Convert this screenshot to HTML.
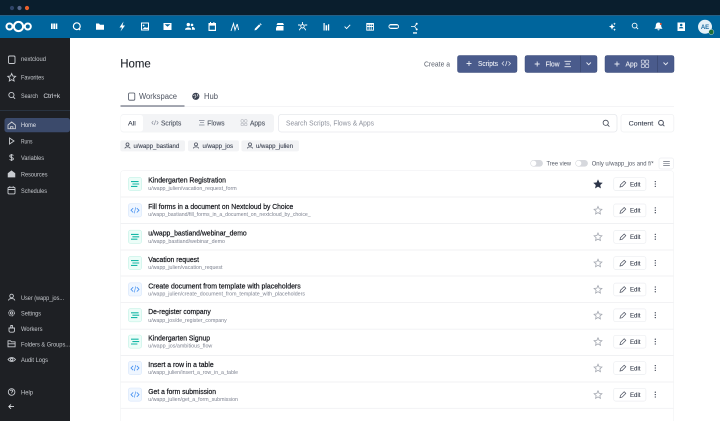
<!DOCTYPE html>
<html><head><meta charset="utf-8"><style>
html,body{margin:0;padding:0;background:#fff;width:720px;height:421px;overflow:hidden}
svg{display:block;filter:blur(.25px)}
text{font-family:"Liberation Sans",sans-serif}
.t{font-size:7.6px;font-weight:normal;fill:#14161c;stroke:#14161c;stroke-width:.22}
.s{font-size:5.6px;fill:#7d8290}
.n{font-size:6.4px;fill:#c5c8cd}
.l{font-size:7px;fill:#3b414e}
.e{font-size:6.6px;fill:#3a4150;stroke:#3a4150;stroke-width:.12}
.b{font-size:7px;fill:#eef0f6;stroke:#eef0f6;stroke-width:.1}
.ic{fill:none;stroke:#c9ccd1;stroke-width:.9}
.hw{fill:#fff}
.hs{fill:none;stroke:#fff;stroke-width:1.2}
</style></head><body>
<svg width="720" height="421" viewBox="0 0 720 421" xmlns="http://www.w3.org/2000/svg">
<defs>
<g id="flow"><rect x="-6.6" y="-6.6" width="13.2" height="13.2" rx="2.2" fill="#ecfdf8" stroke="#c4f2e6" stroke-width=".6"/><path d="M-4 -2.4H3.6M-2.6 0H4.2M-4 2.4H2.4" stroke="#14b8a6" stroke-width="1.1" fill="none"/></g>
<g id="code"><rect x="-6.6" y="-6.6" width="13.2" height="13.2" rx="2.2" fill="#eff6ff" stroke="#d8e6fb" stroke-width=".6"/><path d="M-1.8 -2.2L-4 0L-1.8 2.2M1.8 -2.2L4 0L1.8 2.2" stroke="#3b8bf0" stroke-width=".8" fill="none"/><path d="M.7 -3L-.7 3" stroke="#3b8bf0" stroke-width=".6"/></g>
<path id="star" d="M0 -3.8L1.15 -1.25L3.9 -.95L1.85 .95L2.4 3.7L0 2.3L-2.4 3.7L-1.85 .95L-3.9 -.95L-1.15 -1.25Z"/>
<g id="act">
<use href="#star" x="598" fill="none" stroke="#a3a7b0" stroke-width=".8"/>
<rect x="613.7" y="-6.3" width="32.2" height="12.8" rx="2" fill="#fff" stroke="#eceef1" stroke-width=".7"/>
<path d="M620 3L620.5 .8L624.2 -2.8L625.8 -1.2L622.2 2.5Z" fill="none" stroke="#4b5160" stroke-width=".7"/>
<text x="630" y="2.3" class="e" textLength="10.5" lengthAdjust="spacingAndGlyphs">Edit</text>
<circle cx="655.3" cy="-2.4" r=".65" fill="#3a4150"/><circle cx="655.3" cy="0" r=".65" fill="#3a4150"/><circle cx="655.3" cy="2.4" r=".65" fill="#3a4150"/>
</g>
<g id="usr"><circle cx="0" cy="-1.4" r="1.5" fill="none" stroke="#4b5160" stroke-width=".8"/><path d="M-2.6 2.6C-2.3 .6 2.3 .6 2.6 2.6" fill="none" stroke="#4b5160" stroke-width=".8"/></g>
<g id="mini"><rect x="-3" y="-3" width="2.5" height="2.5" rx=".5"/><rect x=".5" y="-3" width="2.5" height="2.5" rx=".5"/><rect x="-3" y=".5" width="2.5" height="2.5" rx=".5"/><rect x=".5" y=".5" width="2.5" height="2.5" rx=".5"/></g>
</defs>

<rect width="720" height="421" fill="#fff"/>
<rect width="720" height="15" fill="#0a1e2d"/>
<circle cx="12" cy="8" r="2.1" fill="#2f4468"/><circle cx="19.5" cy="8" r="2.1" fill="#56678a"/><circle cx="27" cy="8" r="2.1" fill="#e8602c"/>
<rect y="15" width="720" height="23" fill="#00659c"/>
<rect y="15" width="720" height=".8" fill="#2f5f80"/>
<g fill="none" stroke="#fff" stroke-width="2"><circle cx="9.5" cy="26.5" r="3"/><circle cx="18.5" cy="26.5" r="4.6"/><circle cx="27.8" cy="26.5" r="3"/></g>

<g class="hw">
<rect x="51" y="23.5" width="1.7" height="5.5"/><rect x="53.3" y="23.5" width="1.7" height="5.5"/><rect x="55.6" y="23.5" width="1.7" height="5.5"/>
<path d="M96 23.5h3l1 1.2h4v5h-8z"/>
<path d="M123.5 21.5L119.5 27.5H122L120.5 31.5L125 25.5H122.5Z"/>
<path fill-rule="evenodd" d="M141 22.5h8v8h-8zM142 23.5v6h6v-6z"/><circle cx="143.6" cy="25.5" r=".9"/><path d="M142.5 29l2.5-2 1.2 1 1-.8.8.8v1z"/>
<path fill-rule="evenodd" d="M163.5 23h8v7h-8zM164.6 24.2l2.9 2.6 2.9-2.6z"/>
<circle cx="188.3" cy="24.6" r="1.7"/><circle cx="192" cy="24.9" r="1.3"/><path d="M185 29.7c0-3 6.4-3 6.4 0zM192 27c2 0 3 1 3 2.7h-3z"/>
<path fill-rule="evenodd" d="M208.5 23h7.5v8h-7.5zM209.6 25.6v4.2h5.3v-4.2z"/><rect x="210" y="22" width="1" height="1.6"/><rect x="213.4" y="22" width="1" height="1.6"/>
<path d="M254.5 30.4l.4-1.8 4.2-4.2 1.4 1.4-4.2 4.2zM259.6 23.9l.7-.7 1.4 1.4-.7.7z"/>
<path d="M277 26h6.5v4.5H276v-2.5l1-2zM277.5 23h5.5l1 2h-7.5z"/>
<path d="M323.5 23h1.2v7.5h-1.2zM325.6 25.2h1.6v5.3h-1.6zM328 24.2h1.2v6.3H328z" />
<path fill-rule="evenodd" d="M366.3 23h7.6v7.6h-7.6zM367.3 24.6v1.4h1.4v-1.4zM369.6 24.6v1.4h1.2v-1.4zM371.6 24.6v1.4h1.4v-1.4zM367.3 27v2.7h1.4V27zM369.6 27v2.7h1.2V27zM371.6 27v2.7h1.4V27z"/>
<path fill-rule="evenodd" d="M391 24h5.5a2.5 2.5 0 0 1 0 5H391a2.5 2.5 0 0 1 0-5zM390.5 25.4a1.2 1.2 0 0 0 0 2.4h6.5a1.2 1.2 0 0 0 0-2.4z"/>
<rect x="413" y="32.3" width="4" height="1.3"/><circle cx="416.7" cy="23.8" r="1"/><circle cx="416.7" cy="29.4" r="1"/>
</g>
<g class="hs">
<circle cx="76.8" cy="26.2" r="3.4"/><path d="M78.6 28.6l1.6 1.4"/>
<path d="M231 31L233.5 23.5L235 30L237.2 24M237.2 24L238.6 30" stroke-width=".9"/>
<circle cx="302.5" cy="26.3" r="1.7" stroke-width=".9"/><path d="M298 25h2.6M304.6 25h2.6M302.5 22v2.4M300.7 28l-1.5 2.3M304.3 28l1.5 2.3" stroke-width=".9"/>
<path d="M344.6 26.6l2 2 3.6-3.8" stroke-width=".9"/>
<path d="M411 26.5h3.6l2-2.6M414.6 26.5l2 2.6" stroke-width=".8"/>
</g>
<g class="hw">
<path d="M612 23.5l.9 2.2 2.2.9-2.2.9-.9 2.2-.9-2.2-2.2-.9 2.2-.9zM614.5 22.5l.4 1 1 .4-1 .4-.4 1-.4-1-1-.4 1-.4zM614.5 28.3l.4 1 1 .4-1 .4-.4 1-.4-1-1-.4 1-.4z"/>
<path d="M658.5 22.5c2 0 2.7 1.5 2.7 3.2 0 1.7 1 2.4 1.3 3H654.5c.3-.6 1.3-1.3 1.3-3 0-1.7.7-3.2 2.7-3.2zM657.4 29.3h2.2a1.1 1.1 0 0 1-2.2 0z"/>
<path fill-rule="evenodd" d="M677.5 22.5h7.5v8.5h-7.5zM681.2 23.7a1.3 1.3 0 1 0 .01 0zM679 28.4c0-2 4.4-2 4.4 0z"/>
</g>
<circle cx="660.8" cy="24" r="1" fill="#e8502c"/>
<circle cx="634.6" cy="25.6" r="2.4" fill="none" stroke="#fff" stroke-width=".9"/><path d="M636.3 27.3l1.8 1.8" stroke="#fff" stroke-width=".9"/>
<circle cx="705" cy="26.8" r="7" fill="#e6f1f7"/>
<text x="705" y="29" text-anchor="middle" font-size="6" fill="#1f6ea3" font-weight="bold">AE</text>
<circle cx="711.3" cy="32" r="2.6" fill="#1b6e37" stroke="#cfe1ea" stroke-width=".5"/>

<rect y="38" width="70" height="383" fill="#1e2024"/>
<path d="M0 110.5H70" stroke="#2e3a4a" stroke-width=".7"/>
<rect x="4.5" y="118" width="65.5" height="14.2" rx="2.5" fill="#3b4a6b"/>
<rect x="8.5" y="56" width="6.5" height="7.5" rx="1.2" class="ic"/>
<use href="#star" x="11.7" y="77.3" class="ic"/>
<circle cx="11.4" cy="95" r="2.6" class="ic"/><path d="M13.3 97l1.8 1.8" class="ic"/>
<path d="M8 125l3.7-3 3.7 3v3.7H8zM10.5 128.7v-2h2.4v2" class="ic"/>
<path d="M9.5 138l4.5 3-4.5 3z" class="ic"/>
<path d="M13.4 155.5c-.6-1-3.6-1-3.6.6 0 1.8 3.6.9 3.6 2.8 0 1.5-3.2 1.5-3.8.4M11.6 154v7" class="ic"/>
<path d="M11.5 171l3.3 2.5v3.4h-6.6v-3.4z" class="ic" style="fill:#c9ccd1"/>
<rect x="8" y="187.3" width="7" height="6.6" rx="1" class="ic"/><path d="M8 189.5h7M9.8 186.2v1.6M13.2 186.2v1.6" class="ic"/>
<circle cx="11.6" cy="296" r="1.8" class="ic"/><path d="M8.5 300.5c.3-2.6 6-2.6 6.3 0" class="ic"/>
<circle cx="11.6" cy="313" r="2.9" class="ic" stroke-dasharray="1 .5"/><circle cx="11.6" cy="313" r="1.2" class="ic"/>
<path d="M9 328h5.5v2.6c0 1-.8 1.6-1.7 1.6h-2c-1 0-1.8-.6-1.8-1.6zM10.8 328v-2.5h1.6v2.5" class="ic"/>
<path d="M8 346.8v-6h2.5l1 1h3.6v5zM8 343.8h7" class="ic"/>
<path d="M8 359.5c2-2.6 5.4-2.6 7.5 0-2.1 2.6-5.5 2.6-7.5 0z" class="ic"/><circle cx="11.7" cy="359.5" r="1.2" class="ic"/>
<circle cx="11.6" cy="392" r="3.3" class="ic"/><path d="M10.5 391c.2-1.3 2.3-1.3 2.3 0 0 .8-1.1.8-1.2 1.8M11.6 393.6v.3" class="ic"/>
<path d="M14 406.6H9M11 404.4L8.8 406.6L11 408.8" stroke="#dfe1e5" stroke-width=".9" fill="none"/>

<text x="21" y="61.1" class="n" textLength="25" lengthAdjust="spacingAndGlyphs">nextcloud</text>
<text x="21" y="79.3" class="n" textLength="23" lengthAdjust="spacingAndGlyphs">Favorites</text>
<text x="21" y="97.8" class="n" textLength="17" lengthAdjust="spacingAndGlyphs">Search</text>
<text x="43.5" y="97.8" class="n" style="stroke:#c5c8cd;stroke-width:.12" textLength="16.5" lengthAdjust="spacingAndGlyphs">Ctrl+k</text>
<text x="21" y="127.1" class="n" style="fill:#e3e6ec" textLength="15" lengthAdjust="spacingAndGlyphs">Home</text>
<text x="21" y="143.4" class="n" textLength="11.5" lengthAdjust="spacingAndGlyphs">Runs</text>
<text x="21" y="160.1" class="n" textLength="23" lengthAdjust="spacingAndGlyphs">Variables</text>
<text x="21" y="176.5" class="n" textLength="26.5" lengthAdjust="spacingAndGlyphs">Resources</text>
<text x="21" y="192.9" class="n" textLength="26" lengthAdjust="spacingAndGlyphs">Schedules</text>
<text x="21" y="299.8" class="n" textLength="43" lengthAdjust="spacingAndGlyphs">User (wapp_jos...</text>
<text x="21" y="315.5" class="n" textLength="20" lengthAdjust="spacingAndGlyphs">Settings</text>
<text x="21" y="330.8" class="n" textLength="21.5" lengthAdjust="spacingAndGlyphs">Workers</text>
<text x="21" y="346.4" class="n" textLength="49" lengthAdjust="spacingAndGlyphs">Folders &amp; Groups...</text>
<text x="21" y="361.8" class="n" textLength="27" lengthAdjust="spacingAndGlyphs">Audit Logs</text>
<text x="21" y="394.3" class="n" textLength="12" lengthAdjust="spacingAndGlyphs">Help</text>

<text x="120.3" y="67.5" font-size="11.5" fill="#20242c" stroke="#20242c" stroke-width=".1" textLength="30.5" lengthAdjust="spacingAndGlyphs">Home</text>
<text x="424" y="66.4" class="l" style="fill:#5a606c" textLength="26" lengthAdjust="spacingAndGlyphs">Create a</text>

<rect x="457.5" y="55.5" width="59.5" height="17" rx="2" fill="#4a5b8c" stroke="#3f4f7c" stroke-width=".5"/>
<path d="M469 61v5M466.5 63.5h5" stroke="#e6e9f2" stroke-width=".9"/>
<text x="478" y="65.8" class="b" textLength="20" lengthAdjust="spacingAndGlyphs">Scripts</text>
<path d="M504 61.5L502 63.5L504 65.5M508.5 61.5L510.5 63.5L508.5 65.5M507 61L505.5 66" stroke="#e6e9f2" stroke-width=".7" fill="none"/>

<rect x="525" y="55.5" width="72" height="17" rx="2" fill="#4a5b8c" stroke="#3f4f7c" stroke-width=".5"/>
<path d="M580.5 55.5v17" stroke="#3a4870" stroke-width=".7"/>
<path d="M537.2 61.5v5M534.7 64h5" stroke="#e6e9f2" stroke-width=".9"/>
<text x="545.5" y="66.4" class="b" textLength="14" lengthAdjust="spacingAndGlyphs">Flow</text>
<path d="M564.5 61.3h6.5M565.5 64h4.5M564.5 66.7h6.5" stroke="#e6e9f2" stroke-width=".9"/>
<path d="M586.5 62.5l2.2 2.2 2.2-2.2" stroke="#e6e9f2" stroke-width=".9" fill="none"/>

<rect x="605" y="55.5" width="69" height="17" rx="2" fill="#4a5b8c" stroke="#3f4f7c" stroke-width=".5"/>
<path d="M657.5 55.5v17" stroke="#3a4870" stroke-width=".7"/>
<path d="M617 61.5v5M614.5 64h5" stroke="#e6e9f2" stroke-width=".9"/>
<text x="625.5" y="66.4" class="b" textLength="12" lengthAdjust="spacingAndGlyphs">App</text>
<use href="#mini" transform="translate(645 63.8) scale(1.25)" fill="none" stroke="#e6e9f2" stroke-width=".55"/>
<path d="M663.5 62.5l2.2 2.2 2.2-2.2" stroke="#e6e9f2" stroke-width=".9" fill="none"/>

<path d="M120.5 106.6H674" stroke="#f0f1f3" stroke-width=".8"/>
<rect x="120.5" y="105.3" width="64" height="1.4" fill="#7f8492"/>
<rect x="128.6" y="93" width="6.2" height="7.2" rx="1.1" fill="none" stroke="#4b5160" stroke-width=".8"/>
<text x="139" y="99.2" font-size="8" fill="#4d5360" textLength="38" lengthAdjust="spacingAndGlyphs">Workspace</text>
<circle cx="195.8" cy="96.3" r="3.6" fill="#3a4150"/><path d="M193 95.5l2.4-.8.6 2-1.6 1.6M197.3 94l.7 2.5" stroke="#fff" stroke-width=".6" fill="none"/>
<text x="204" y="99.2" font-size="8" fill="#4d5360" textLength="14" lengthAdjust="spacingAndGlyphs">Hub</text>

<rect x="120.5" y="114" width="153.5" height="18.5" rx="3" fill="#f3f4f6"/>
<rect x="121" y="115" width="22" height="16.5" rx="2.5" fill="#fff"/>
<text x="128" y="125.3" class="e" textLength="7.8" lengthAdjust="spacingAndGlyphs">All</text>
<path d="M153.3 120.9L151.8 122.7L153.3 124.5M156.7 120.9L158.2 122.7L156.7 124.5M155.6 120.3L154.4 125" stroke="#7d8290" stroke-width=".6" fill="none"/>
<text x="161" y="125.3" class="l" style="fill:#4d5360;stroke:#4d5360;stroke-width:.12" textLength="20.3" lengthAdjust="spacingAndGlyphs">Scripts</text>
<path d="M199 120.4h5.5M200 122.7h4M199 125h5.5" stroke="#7d8290" stroke-width=".7"/>
<text x="207.3" y="125.3" class="l" style="fill:#4d5360;stroke:#4d5360;stroke-width:.12" textLength="17.2" lengthAdjust="spacingAndGlyphs">Flows</text>
<use href="#mini" x="244" y="122.7" fill="none" stroke="#a0a4ad" stroke-width=".5"/>
<text x="250" y="125.3" class="l" style="fill:#4d5360;stroke:#4d5360;stroke-width:.12" textLength="15" lengthAdjust="spacingAndGlyphs">Apps</text>
<rect x="278.4" y="114.4" width="338.6" height="17.6" rx="3" fill="#fff" stroke="#e6e8ec" stroke-width=".8"/>
<text x="286" y="125.3" font-size="7" fill="#8d919c" textLength="88" lengthAdjust="spacingAndGlyphs">Search Scripts, Flows &amp; Apps</text>
<circle cx="605.7" cy="122.8" r="2.6" fill="none" stroke="#3f4552" stroke-width=".8"/><path d="M607.6 124.8l1.8 1.8" stroke="#3f4552" stroke-width=".8"/>
<rect x="621" y="114.4" width="52.8" height="17.6" rx="2.5" fill="#fff" stroke="#f0f1f3" stroke-width=".8"/>
<text x="628.7" y="125.3" class="e" textLength="24.5" lengthAdjust="spacingAndGlyphs">Content</text>
<circle cx="661" cy="122.8" r="2.4" fill="none" stroke="#4b5160" stroke-width="1"/><path d="M662.8 124.6l1.6 1.6" stroke="#4b5160" stroke-width=".9"/>

<rect x="120.3" y="140.4" width="64.7" height="11" rx="2" fill="#f2f3f5"/>
<rect x="188" y="140.4" width="51" height="11" rx="2" fill="#f2f3f5"/>
<rect x="241.4" y="140.4" width="57.6" height="11" rx="2" fill="#f2f3f5"/>
<use href="#usr" x="127.5" y="145.8"/><use href="#usr" x="196" y="145.8"/><use href="#usr" x="250" y="145.8"/>
<text x="133.5" y="148" class="e" textLength="45.7" lengthAdjust="spacingAndGlyphs">u/wapp_bastiand</text>
<text x="202.5" y="148" class="e" textLength="30.5" lengthAdjust="spacingAndGlyphs">u/wapp_jos</text>
<text x="256" y="148" class="e" textLength="37" lengthAdjust="spacingAndGlyphs">u/wapp_julien</text>

<rect x="530.3" y="160" width="12.6" height="6.6" rx="3.3" fill="#d6d8dd"/><circle cx="533.6" cy="163.3" r="2.7" fill="#fff"/>
<rect x="575.3" y="160" width="12.6" height="6.6" rx="3.3" fill="#d6d8dd"/><circle cx="578.6" cy="163.3" r="2.7" fill="#fff"/>
<text x="546.5" y="165.3" font-size="6" fill="#555b67" textLength="24.5" lengthAdjust="spacingAndGlyphs">Tree view</text>
<text x="591.7" y="165.3" font-size="6" fill="#555b67" textLength="62" lengthAdjust="spacingAndGlyphs">Only u/wapp_jos and f/*</text>
<rect x="659" y="158" width="14.6" height="11" rx="2" fill="#fff" stroke="#eceef1" stroke-width=".7"/>
<path d="M663.2 161.3h6.6M663.2 163.5h6.6M663.2 165.7h6.6" stroke="#4b5160" stroke-width=".6"/>

<path d="M124 170.6H670.5A3 3 0 0 1 673.6 173.6V421M120.5 421V173.6A3 3 0 0 1 124 170.6" fill="none" stroke="#f3f4f5" stroke-width=".7"/>
<g stroke="#f0f1f3" stroke-width=".9">
<path d="M120.5 197H673.6M120.5 223.5H673.6M120.5 250H673.6M120.5 276H673.6M120.5 302.6H673.6M120.5 329.2H673.6M120.5 355.5H673.6M120.5 382H673.6M120.5 408.3H673.6"/>
</g>

<g transform="translate(0,184)">
<use href="#flow" x="135"/>
<text x="148.3" y="-1.6" class="t" textLength="77.7" lengthAdjust="spacingAndGlyphs">Kindergarten Registration</text>
<text x="148.3" y="5.9" class="s" textLength="88.4" lengthAdjust="spacingAndGlyphs">u/wapp_julien/vacation_request_form</text>
<use href="#act"/>
<use href="#star" x="598" fill="#2c3448" stroke="#2c3448" stroke-width=".6"/>
</g>
<g transform="translate(0,210.3)">
<use href="#code" x="135"/>
<text x="148.3" y="-1.1" class="t" textLength="145" lengthAdjust="spacingAndGlyphs">Fill forms in a document on Nextcloud by Choice</text>
<text x="148.3" y="5.7" class="s" textLength="162.4" lengthAdjust="spacingAndGlyphs">u/wapp_bastiand/fill_forms_in_a_document_on_nextcloud_by_choice_</text>
<use href="#act"/>
</g>
<g transform="translate(0,236.8)">
<use href="#flow" x="135"/>
<text x="148.3" y="-1.3" class="t" textLength="98.4" lengthAdjust="spacingAndGlyphs">u/wapp_bastiand/webinar_demo</text>
<text x="148.3" y="6.1" class="s" textLength="76.7" lengthAdjust="spacingAndGlyphs">u/wapp_bastiand/webinar_demo</text>
<use href="#act"/>
</g>
<g transform="translate(0,263)">
<use href="#flow" x="135"/>
<text x="148.3" y="-1.1" class="t" textLength="50.7" lengthAdjust="spacingAndGlyphs">Vacation request</text>
<text x="148.3" y="5.9" class="s" textLength="74.2" lengthAdjust="spacingAndGlyphs">u/wapp_julien/vacation_request</text>
<use href="#act"/>
</g>
<g transform="translate(0,289.4)">
<use href="#code" x="135"/>
<text x="148.3" y="-1.1" class="t" textLength="152.4" lengthAdjust="spacingAndGlyphs">Create document from template with placeholders</text>
<text x="148.3" y="5.9" class="s" textLength="156.7" lengthAdjust="spacingAndGlyphs">u/wapp_julien/create_document_from_template_with_placeholders</text>
<use href="#act"/>
</g>
<g transform="translate(0,315.2)">
<use href="#flow" x="135"/>
<text x="148.3" y="-1.2" class="t" textLength="62.4" lengthAdjust="spacingAndGlyphs">De-register company</text>
<text x="148.3" y="6.7" class="s" textLength="78.4" lengthAdjust="spacingAndGlyphs">u/wapp_jos/de_register_company</text>
<use href="#act"/>
</g>
<g transform="translate(0,341.6)">
<use href="#flow" x="135"/>
<text x="148.3" y="-1.1" class="t" textLength="61.7" lengthAdjust="spacingAndGlyphs">Kindergarten Signup</text>
<text x="148.3" y="6.1" class="s" textLength="64" lengthAdjust="spacingAndGlyphs">u/wapp_jos/ambitious_flow</text>
<use href="#act"/>
</g>
<g transform="translate(0,368)">
<use href="#code" x="135"/>
<text x="148.3" y="-1.1" class="t" textLength="65.4" lengthAdjust="spacingAndGlyphs">Insert a row in a table</text>
<text x="148.3" y="6.1" class="s" textLength="89.7" lengthAdjust="spacingAndGlyphs">u/wapp_julien/insert_a_row_in_a_table</text>
<use href="#act"/>
</g>
<g transform="translate(0,394.6)">
<use href="#code" x="135"/>
<text x="148.3" y="-.7" class="t" textLength="67.7" lengthAdjust="spacingAndGlyphs">Get a form submission</text>
<text x="148.3" y="6.5" class="s" textLength="89.7" lengthAdjust="spacingAndGlyphs">u/wapp_julien/get_a_form_submission</text>
<use href="#act"/>
</g>
</svg>
</body></html>
